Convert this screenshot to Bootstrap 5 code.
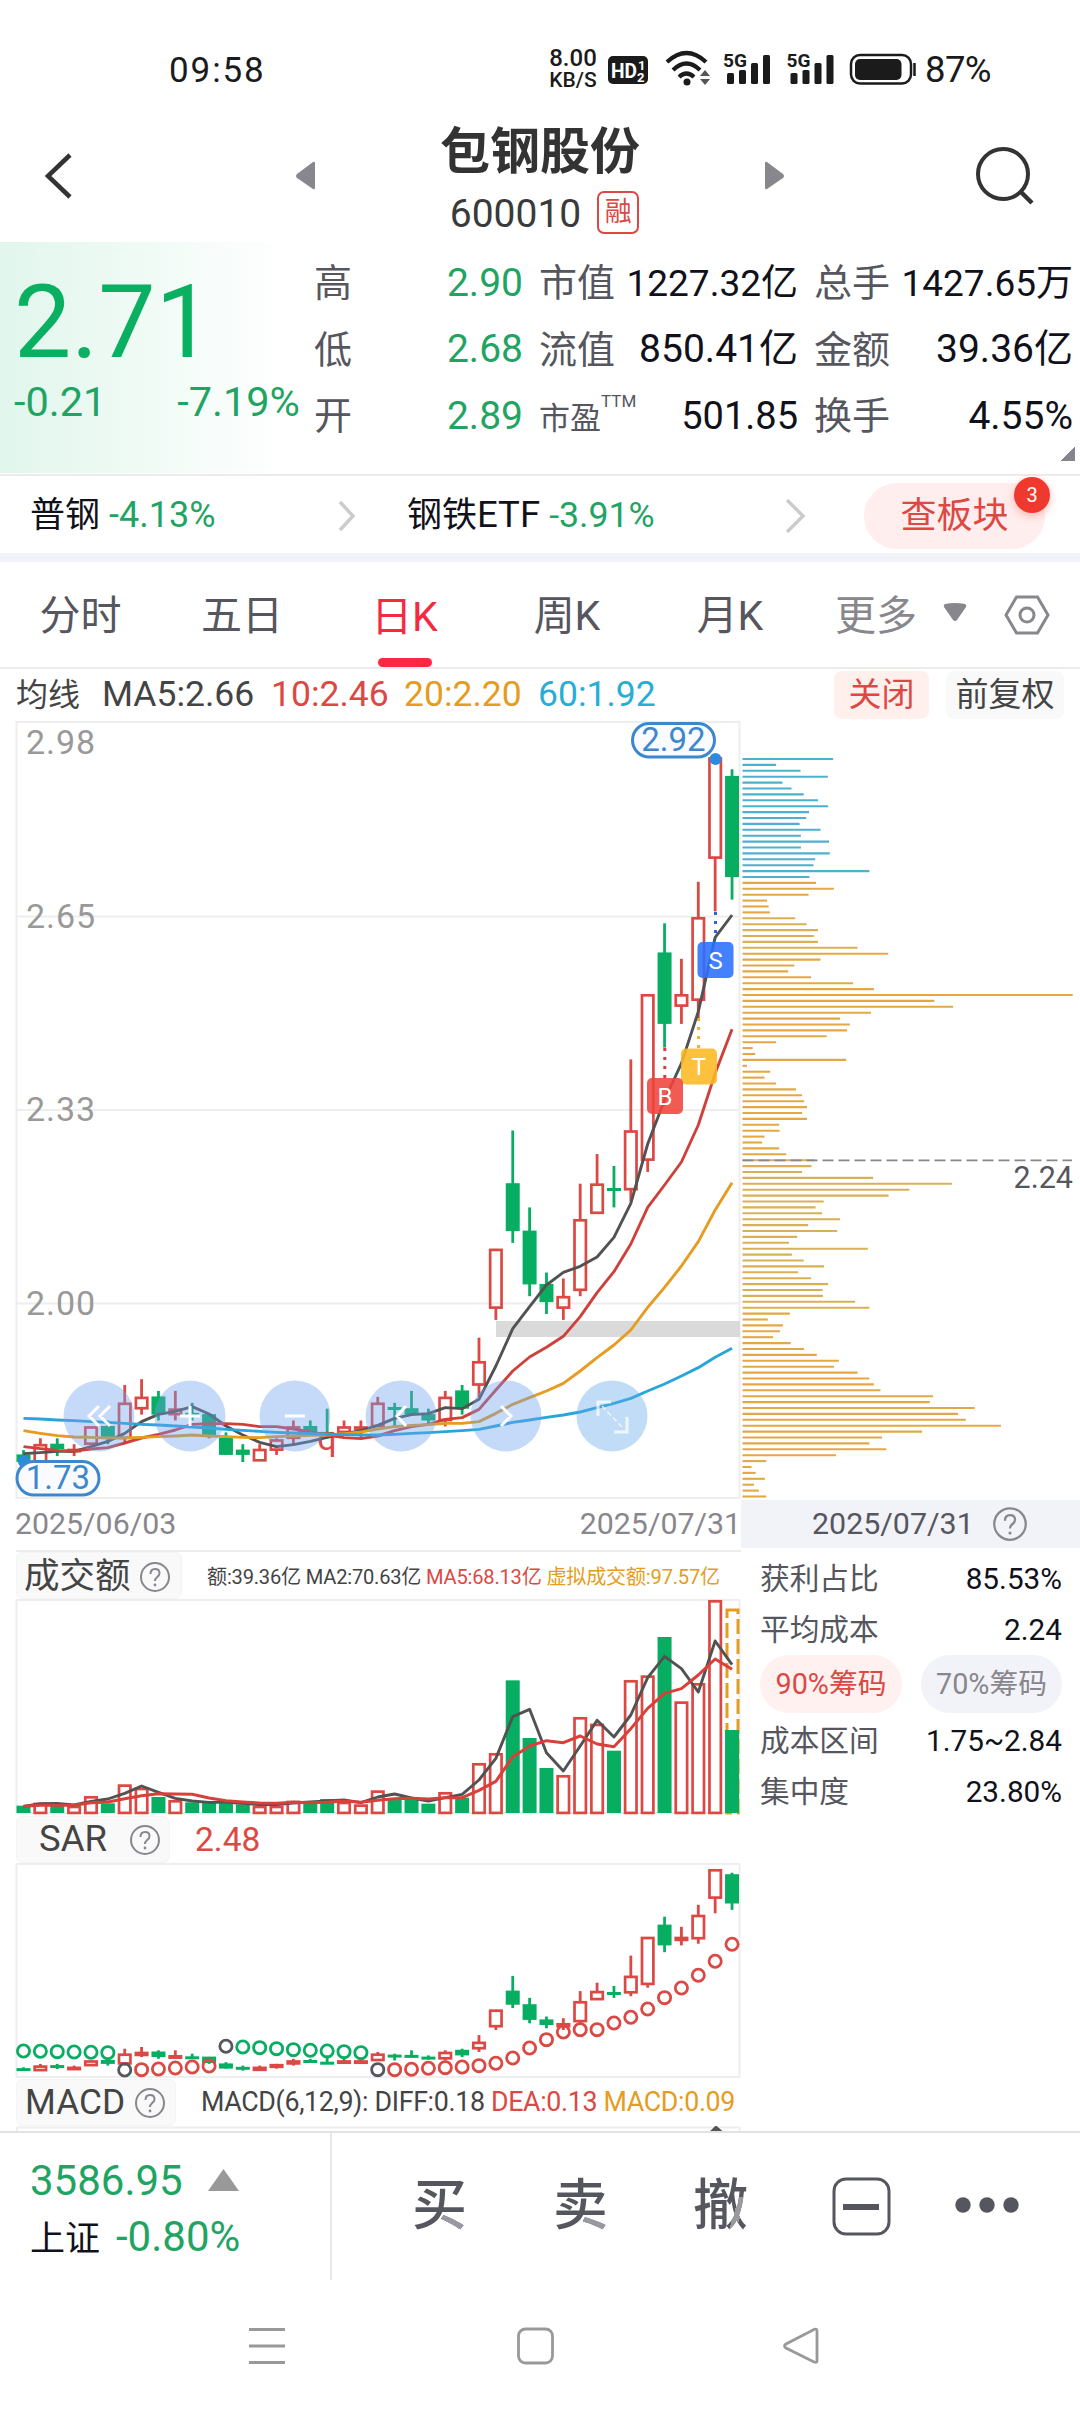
<!DOCTYPE html>
<html lang="zh-CN">
<head>
<meta charset="utf-8">
<meta name="viewport" content="width=device-width, initial-scale=1">
<title>包钢股份 600010</title>
<link href="https://cdn.jsdelivr.net/npm/bootstrap@5.3.0/dist/css/bootstrap.min.css" rel="stylesheet">
<style>
:root{--up:#dc4843;--down:#1fa463;--ink:#55565e;--ink2:#10111a;--pale:#f2f3f8;--rose:#ffeeed}
body{font-family:Roboto,"Noto Sans CJK SC",sans-serif;width:1080px;background:#fff;color:var(--ink2);overflow-x:hidden}
.app{width:1080px;height:2412px;overflow:hidden}
.app *{white-space:nowrap;line-height:1}
svg{display:block;flex:none}
.c-up{color:var(--up)}.c-down{color:var(--down)}.c-ink{color:var(--ink)}.c-txt{color:#444}.c-gray{color:#88878d}.c-gold{color:#e59c20}.c-cyan{color:#28add6}.c-row>*{flex:none}
.statusbar{height:106px;padding:34px 86px 0 169px;font-size:35px;color:#1b1b1b}
.clock{letter-spacing:1.9px}
.netrate{font-size:24px;width:56px;text-align:center;font-weight:500}
.netrate span{display:block;height:24px}
.titlebar{height:136px}
.stockname{font-size:50px;font-weight:700;color:#333;height:64px}
.stockcode{font-size:39px;color:#3a3a3a}
.rong{width:42px;height:43px;border:2px solid var(--up);border-radius:7px;font-size:27px}
.quote{height:232px}
.lastbox{width:303px;height:231px;background:linear-gradient(90deg,#e1f6ec,#fff 290px);padding:29px 3px 0 14px}
.lastprice{font-size:102px;color:#0ab062;height:110px}
.chg{font-size:41.5px}
.figures{width:777px;padding:8px 5px 0 11px;font-size:39px}
.figures .fig-line{height:66.5px}
.figures .cjk{font-size:38px}
.tight{font-size:37px}
.f1{width:209px}.f2{width:259px}.f3{width:259px}
.ttm{font-size:17px;margin-bottom:30px}
.cornertri{width:15px;height:15px;background:linear-gradient(135deg,transparent 50%,#85858d 50%);margin:-4px 0 0 auto}
.sector{height:79px;border-top:2px solid #ececec;font-size:36.5px;padding-left:30px;padding-top:2px}
.sector .s-name{font-size:35px}
.btn-sector{width:181px;height:66px;border-radius:33px;background:var(--rose);color:var(--up);font-size:36px}
.dotnum{position:absolute;right:-5px;top:-6px;width:36px;height:36px;border-radius:50%;background:#ef392f;color:#fff;font-size:20px;box-shadow:0 3px 9px #f0877f88}
.band{height:9px;background:var(--pale)}
.ktabs{height:107px;border-bottom:2px solid #ececec;font-size:41px;color:var(--ink)}
.ktabs>div{flex:none;height:105px;padding-top:4px}
.ktabs .on{color:#f5293f}
.ktabs .on i{display:block;width:54px;height:9px;border-radius:5px;background:#ff2842}
.marow{height:53px;font-size:35.5px;padding:0 0 2px 16px}
.chip{border-radius:8px;height:48px;font-size:33px}
.kcol{width:741px;height:1409px}
#kline{overflow:visible}
.ccol{width:339px}
.dates{height:51px;padding:10px 0 0 15px;font-size:30.3px}
.seg{border-top:2px solid #ececec;margin-left:16px}
.ind-head{height:47px}
.ind-head.seg{height:49px}
.ind-tag{background:#f9f9f9;border:1px solid #f4f4f4;border-radius:7px;height:47px;font-size:37px;color:#444}
.cdate{height:48px;background:var(--pale);font-size:30.4px;color:var(--ink)}
.stats{padding:5px 18px 0 19px;font-size:29.7px}
.stats .st{height:51px}
.pill{height:58px;border-radius:29px;font-size:28.8px}
.botbar{height:149px;border-top:2px solid #e2e2e2}
.idx{width:332px;height:147px;border-right:2px solid #e8e8e8;padding:27px 0 0 30px;font-size:42px}
.act{font-size:55px;font-weight:500;color:transparent;background:linear-gradient(#999aa0,#999aa0) 100% 100%/25px 20px no-repeat,#55565e;-webkit-background-clip:text;background-clip:text;width:55px;height:60px;line-height:60px}
.act-che{background:linear-gradient(107deg,transparent 69%,#999aa0 69% 80%,transparent 80%) 0 100%/100% 38px no-repeat,#55565e;-webkit-background-clip:text;background-clip:text}
.sysnav{height:132px}
</style>
</head>
<body>
<div class="app d-flex flex-column">
  <header class="statusbar d-flex align-items-center">
    <span class="clock">09:58</span>
    <div class="ms-auto d-flex align-items-center">
      <div class="netrate" style="margin-right:4px"><span>8.00</span><span style="font-size:21px">KB/S</span></div>
      <svg width="314" height="44" viewBox="605 48 314 44">
        <rect x="608" y="56" width="40" height="28" rx="5" fill="#1b1b1b"/>
        <g fill="#fff" font-weight="700"><text x="611" y="78" font-size="21" textLength="26" lengthAdjust="spacingAndGlyphs">HD</text><text x="638" y="70" font-size="13">1</text><text x="637" y="82" font-size="13">2</text></g>
        <g fill="none" stroke="#1b1b1b" stroke-width="4.200"><path d="M667 62q19.500-18 39 0M673 70q13.500-13 27 0M679 77q7.500-7 15 0"/></g>
        <circle cx="687" cy="82" r="3.500" fill="#1b1b1b"/><path d="M700 76l5-6 5 6zM700 79l5 6 5-6z" fill="#555"/>
        <g id="sig" fill="#1b1b1b"><text x="723" y="67" font-size="19" font-weight="700" textLength="24" lengthAdjust="spacingAndGlyphs">5G</text><rect x="727" y="73" width="7" height="11" rx="1.500"/><rect x="739" y="70" width="7" height="14" rx="1.500"/><rect x="751" y="63" width="7" height="21" rx="1.500"/><rect x="763" y="55" width="7" height="29" rx="1.500"/></g>
        <use href="#sig" x="63.500"/>
        <rect x="851" y="55" width="60" height="28.500" rx="9" fill="none" stroke="#1b1b1b" stroke-width="2.500"/><rect x="855" y="59" width="46.500" height="21" rx="5" fill="#1b1b1b"/><path d="M914.500 63v13" stroke="#1b1b1b" stroke-width="2.500"/>
      </svg>
      <span style="margin-left:6px;width:69px;font-size:36.5px;letter-spacing:-.6px">87%</span>
    </div>
  </header>

  <div class="titlebar d-flex align-items-start">
    <svg width="440" height="136" viewBox="0 106 440 136"><path d="M70 155L48 176L70 197" fill="none" stroke="#333" stroke-width="4.500"/><path d="M315 163v25q0 2-2 1L297 178q-2-2 0-4L313 162q2-1 2 1z" fill="#88878d"/></svg>
    <div class="d-flex flex-column align-items-center" style="width:200px;padding-top:21px">
      <div class="stockname">包钢股份</div>
      <div class="d-flex align-items-center" style="padding-left:9px"><span class="stockcode" style="padding-top:3px">600010</span><span class="rong c-up d-flex align-items-center justify-content-center" style="margin-left:16px">融</span></div>
    </div>
    <svg width="440" height="136" viewBox="640 106 440 136"><path d="M765 163v25q0 2 2 1L783 178q2-2 0-4L767 162q-2-1-2 1z" fill="#88878d"/><circle cx="1003" cy="174" r="25" fill="none" stroke="#333" stroke-width="4"/><path d="M1021 192L1032 203" stroke="#333" stroke-width="4.500"/></svg>
  </div>

  <section class="quote d-flex">
    <div class="lastbox c-down"><div class="lastprice">2.71</div><div class="chg d-flex justify-content-between"><span>-0.21</span><span>-7.19%</span></div></div>
    <div class="figures">
      <div class="fig-line d-flex align-items-center"><div class="f1 d-flex align-items-center justify-content-between"><span class="cjk c-ink">高</span><span class="c-down">2.90</span></div><div class="f2 d-flex align-items-center justify-content-between ms-3"><span class="cjk c-ink">市值</span><span class="tight">1227.32亿</span></div><div class="f3 d-flex align-items-center justify-content-between ms-3"><span class="cjk c-ink">总手</span><span class="tight">1427.65万</span></div></div>
      <div class="fig-line d-flex align-items-center"><div class="f1 d-flex align-items-center justify-content-between"><span class="cjk c-ink">低</span><span class="c-down">2.68</span></div><div class="f2 d-flex align-items-center justify-content-between ms-3"><span class="cjk c-ink">流值</span><span>850.41亿</span></div><div class="f3 d-flex align-items-center justify-content-between ms-3"><span class="cjk c-ink">金额</span><span>39.36亿</span></div></div>
      <div class="fig-line d-flex align-items-center"><div class="f1 d-flex align-items-center justify-content-between"><span class="cjk c-ink">开</span><span class="c-down">2.89</span></div><div class="f2 d-flex align-items-center ms-3"><span class="c-ink" style="font-size:31px;padding-top:4px">市盈</span><span class="ttm c-ink">TTM</span><span class="ms-auto" style="font-size:38px">501.85</span></div><div class="f3 d-flex align-items-center justify-content-between ms-3"><span class="cjk c-ink">换手</span><span>4.55%</span></div></div>
      <div class="cornertri"></div>
    </div>
  </section>

  <section class="sector d-flex align-items-center c-row">
    <div style="width:307px"><span class="s-name">普钢</span> <span class="c-down" style="font-size:36px">-4.13%</span></div>
    <svg width="70" height="40"><path d="M3 6L16 20L3 34" fill="none" stroke="#ccc" stroke-width="3.500"/></svg>
    <div style="width:377px"><span class="s-name">钢铁</span>ETF <span class="c-down" style="font-size:35.7px">-3.91%</span></div>
    <svg width="80" height="40"><path d="M3 4L19 20L3 36" fill="none" stroke="#ccc" stroke-width="3.500"/></svg>
    <div class="btn-sector position-relative d-flex align-items-center justify-content-center">查板块<span class="dotnum d-flex align-items-center justify-content-center">3</span></div>
  </section>
  <div class="band"></div>

  <nav class="ktabs d-flex">
    <div class="d-flex align-items-center justify-content-center" style="width:161px">分时</div>
    <div class="d-flex align-items-center justify-content-center" style="width:162px">五日</div>
    <div class="on d-flex flex-column align-items-center justify-content-end" style="width:163px"><span style="margin-bottom:20px">日K</span><i></i></div>
    <div class="d-flex align-items-center justify-content-center" style="width:162px">周K</div>
    <div class="d-flex align-items-center justify-content-center" style="width:164px">月K</div>
    <div class="d-flex align-items-center c-gray" style="padding-left:23px">更多
      <svg class="ms-4" width="140" height="60" viewBox="940 586 140 60"><path d="M944 603q10-2 20 0q2 1 1 3L956 619q-2 2-4 0L943 606q-1-2 1-3z" fill="#88878d"/><path d="M1005 614L1015.500 596H1036.500L1047 614L1036.500 632H1015.500Z" fill="none" stroke="#88878d" stroke-width="3"/><circle cx="1026" cy="614" r="7" fill="none" stroke="#88878d" stroke-width="3"/></svg></div>
  </nav>

  <div class="marow d-flex align-items-center c-row c-txt">
    <span style="font-size:32px;width:86px">均线</span><span style="width:169px">MA5:2.66</span><span class="c-up" style="width:133px">10:2.46</span><span class="c-gold" style="width:134px">20:2.20</span><span class="c-cyan" style="width:119px">60:1.92</span>
    <span class="chip c-up d-flex align-items-center justify-content-center" style="width:95px;margin-left:177px;background:#fff0ee">关闭</span>
    <span class="chip d-flex align-items-center justify-content-center" style="width:118px;margin-left:17px;background:#f9f9f9">前复权</span>
  </div>

  <main class="d-flex" style="height:1409px">
    <div class="kcol">
      <svg id="kline" width="741" height="777" viewBox="0 722 741 777"></svg>
      <div class="dates d-flex justify-content-between c-gray"><span>2025/06/03</span><span>2025/07/31</span></div>
      <div class="seg ind-head d-flex align-items-center">
        <div class="ind-tag d-flex align-items-center" style="width:166px;font-size:35.500px;padding:2px 0 0 7px">成交额<svg class="ms-2" width="32" height="32"><use href="#q"/></svg></div>
        <div class="c-txt" style="margin-left:25px;font-size:20.100px;letter-spacing:-.2px;padding-top:3px">额:39.36亿 MA2:70.63亿 <span class="c-up">MA5:68.13亿</span> <span class="c-gold">虚拟成交额:97.57亿</span></div>
      </div>
      <svg id="vol" width="741" height="217" viewBox="0 1599 741 217"></svg>
      <div class="ind-head d-flex align-items-center" style="margin-left:16px">
        <div class="ind-tag d-flex align-items-center" style="width:154px;padding-left:22px;font-size:36.500px">SAR<svg style="margin-left:22px" width="32" height="32"><use href="#q"/></svg></div>
        <div class="c-up" style="margin-left:25px;font-size:33.500px">2.48</div>
      </div>
      <svg id="sar" width="741" height="216" viewBox="0 1863 741 216"></svg>
      <div class="ind-head d-flex align-items-center" style="margin-left:16px">
        <div class="ind-tag d-flex align-items-center" style="width:160px;padding-left:8px;font-size:35.300px">MACD<svg style="margin-left:9px" width="32" height="32"><use href="#q"/></svg></div>
        <div class="c-txt" style="margin-left:25px;font-size:26.800px;letter-spacing:-.35px">MACD(6,12,9): DIFF:0.18 <span class="c-up">DEA:0.13</span> <span class="c-gold">MACD:0.09</span></div>
      </div>
      <svg width="741" height="5" viewBox="0 2126 741 5"><path d="M17 2140V2127.500H739.500V2140" fill="none" stroke="#eee" stroke-width="2"/><path d="M711 2133L716 2128L725 2136" fill="none" stroke="#555" stroke-width="4"/></svg>
    </div>
    <div class="ccol">
      <svg id="chips" width="339" height="778" viewBox="741 722 339 778"></svg>
      <div class="cdate d-flex align-items-center" style="padding-left:71px">2025/07/31<svg style="margin-left:18px" width="36" height="36" viewBox="0 0 32 32"><use href="#q"/></svg></div>
      <div class="stats">
        <div class="st d-flex align-items-center justify-content-between"><span class="c-ink">获利占比</span><span>85.53%</span></div>
        <div class="st d-flex align-items-center justify-content-between"><span class="c-ink">平均成本</span><span>2.24</span></div>
        <div class="d-flex justify-content-between" style="height:60px"><div class="pill c-up d-flex align-items-center justify-content-center" style="width:142px;background:#fff1f0">90%筹码</div><div class="pill c-gray d-flex align-items-center justify-content-center" style="width:141px;background:var(--pale)">70%筹码</div></div>
        <div class="st d-flex align-items-center justify-content-between"><span class="c-ink">成本区间</span><span>1.75~2.84</span></div>
        <div class="st d-flex align-items-center justify-content-between"><span class="c-ink">集中度</span><span>23.80%</span></div>
      </div>
    </div>
  </main>

  <footer class="botbar d-flex">
    <div class="idx"><div class="c-down d-flex align-items-center" style="height:42px">3586.95<svg style="margin-left:24px" width="34" height="24"><path d="M16.500 0L32 22H1Z" fill="#999"/></svg></div><div class="c-down" style="margin-top:14px;height:42px"><span style="font-size:35px;color:var(--ink2)">上证</span><span style="margin-left:16px">-0.80%</span></div></div>
    <div class="d-flex" style="padding:42px 0 0 80px"><div class="act">买</div><div class="act" style="margin-left:86px">卖</div><div class="act act-che" style="margin-left:85px">撤</div>
      <svg style="margin-left:81px" width="200" height="62" viewBox="829 2175 200 62"><rect x="834" y="2179" width="55" height="55" rx="12" fill="none" stroke="#55565e" stroke-width="3"/><path d="M843 2207h36" stroke="#55565e" stroke-width="6"/><g fill="#55565e"><circle cx="963" cy="2205" r="7.700"/><circle cx="987" cy="2205" r="7.700"/><circle cx="1011" cy="2205" r="7.700"/></g></svg></div>
  </footer>
  <div class="sysnav"><svg width="1080" height="132" viewBox="0 2280 1080 132"><g fill="none" stroke="#999" stroke-width="2.800"><path d="M249 2329.500h36M249 2346h36M249 2362.500h36"/><rect x="518.500" y="2329" width="34" height="34" rx="7"/><path d="M817 2331V2361q0 2-3 1L786 2348q-3-2 0-4L814 2329.500q3-1 3 1.500z"/></g></svg></div>
</div>

<svg width="0" height="0" class="position-absolute"><symbol id="q" viewBox="0 0 32 32"><circle cx="16" cy="16" r="14" fill="none" stroke="#88878d" stroke-width="2"/><path d="M11.500 13q0-5 4.500-5t4.500 4.300q0 2.200-2.500 3.900q-2 1.500-2 3.800" fill="none" stroke="#88878d" stroke-width="2"/><circle cx="16" cy="24" r="1.400" fill="#88878d"/></symbol></svg>

<script>
const R='#dc4843',G='#07ae62',D='#525252',Y='#e59c20',C='#28a6d9';
const X=i=>+(23.5+i*16.87).toFixed(2);
// [rising, high, body top, body bottom, low]
const K=[[0,1.75,1.742,1.73,1.73],[1,1.77,1.76,1.73,1.73],[0,1.77,1.76,1.752,1.74],[1,1.76,1.752,1.748,1.74],[1,1.79,1.79,1.76,1.76],[0,1.80,1.79,1.77,1.76],[1,1.86,1.83,1.77,1.76],[1,1.87,1.84,1.82,1.81],[0,1.85,1.84,1.81,1.80],[1,1.85,1.82,1.81,1.80],[0,1.83,1.812,1.808,1.80],[0,1.81,1.81,1.775,1.77],[0,1.78,1.77,1.742,1.742],[0,1.76,1.75,1.742,1.73],[1,1.76,1.752,1.732,1.732],[1,1.77,1.768,1.75,1.742],[1,1.80,1.79,1.77,1.76],[0,1.80,1.79,1.78,1.775],[0,1.82,1.78,1.775,1.77],[1,1.80,1.79,1.78,1.775],[1,1.80,1.79,1.788,1.77],[1,1.84,1.83,1.79,1.79],[0,1.83,1.822,1.818,1.79],[0,1.85,1.82,1.81,1.81],[0,1.82,1.81,1.80,1.795],[1,1.85,1.84,1.80,1.79],[0,1.86,1.85,1.82,1.81],[1,1.94,1.90,1.86,1.84],[1,2.09,2.09,1.99,1.97],[0,2.29,2.20,2.12,2.10],[0,2.16,2.12,2.03,2.01],[0,2.05,2.03,2,1.98],[1,2.04,2.01,1.99,1.97],[1,2.20,2.14,2.02,2.01],[1,2.25,2.20,2.15,2.15],[0,2.23,2.192,2.188,2.16],[1,2.41,2.29,2.19,2.17],[1,2.52,2.52,2.24,2.22],[0,2.64,2.59,2.47,2.43],[1,2.58,2.52,2.50,2.47],[1,2.71,2.65,2.51,2.48],[1,2.92,2.92,2.75,2.66],[0,2.90,2.888,2.718,2.68]];
const line=(a,b,c,d,s,w=2.8,e='')=>`<line x1="${a}" y1="${b}" x2="${c}" y2="${d}" stroke="${s}" stroke-width="${w}" ${e}/>`;
const poly=(p,s,w=2.9)=>`<polyline points="${p.map(q=>q.join()).join(' ')}" fill="none" stroke="${s}" stroke-width="${w}" stroke-linejoin="round"/>`;
function candles(f,w){return K.map(([up,h,t,b,l],i)=>{const x=X(i);
  if(up){const y1=f(t)+1,y2=Math.max(f(b)-0.5,y1+1.2);return line(x,f(h),x,y1,R)+line(x,y2,x,f(l),R)+`<rect x="${x-w/2+1.3}" y="${y1}" width="${w-2.6}" height="${y2-y1}" fill="none" stroke="${R}" stroke-width="2.7"/>`}
  return line(x,f(h),x,f(l),G)+`<rect x="${x-w/2}" y="${f(t)-.5}" width="${w}" height="${Math.max(3,f(b)-f(t)+.5)}" fill="${G}"/>`}).join('')}
const at=(base,a)=>a.map((v,i)=>[X(i),base+v/3]);
// moving averages, y in thirds of a pixel below 1280
const m5=at(1280,[521,518,514,514,500,484,460,425,403,394,380,402,438,465,487,500,494,484,472,461,452,436,415,404,401,383,386,358,258,146,80,15,-23,-41,-69,-128,-230,-408,-540,-650,-805,-1028,-1095]);
const m10=at(1280,[500,506,511,513,507,503,489,474,463,450,433,431,431,433,440,440,447,456,465,473,476,468,452,440,433,418,413,388,330,273,231,202,169,110,38,-25,-108,-218,-285,-354,-465,-620,-752]);
const m20=at(1280,[452,460,467,471,472,474,474,472,470,468,465,468,470,472,473,470,468,466,465,461,456,447,440,436,434,430,430,425,400,373,353,333,310,273,233,195,150,82,22,-42,-115,-210,-292]);
const m60=at(1280,[415,417,420,422,425,427,430,433,435,438,441,444,448,451,454,457,459,461,463,464,465,465,463,460,458,455,452,448,438,427,420,412,405,396,383,370,355,333,312,288,263,232,205]);
let s='<rect x="16.500" y="722" width="723" height="776" fill="none" stroke="#eee" stroke-width="2"/>';
for(const y of [916.5,1110,1303.5])s+=line(17,y,740,y,'#eee',2);
s+='<rect x="496" y="1321" width="244" height="16" fill="#dadada"/>';
const P=p=>+(757.5+(2.92-p)*592).toFixed(1);
s+=candles(P,14);
s+=line(715.5,912,715.5,933,'#2f62d8',3,'stroke-dasharray="3 6"')+line(698.6,1018,698.6,1050,'#eeb12c',3,'stroke-dasharray="3 6"')+line(664.8,1048,664.8,1080,'#d83a3a',3,'stroke-dasharray="3 6"');
s+='<text x="327" y="1450" text-anchor="middle" font-size="34" fill="#dc4843">q</text>';
s+=poly(m5,D)+poly(m10,'#cf403b')+poly(m20,Y)+poly(m60,C);
const tag=(x,y,c,t)=>`<rect x="${x-18}" y="${y-18}" width="36" height="36" rx="5" fill="${c}" fill-opacity=".88"/><text x="${x}" y="${y+8.5}" text-anchor="middle" font-size="24" fill="#fff">${t}</text>`;
s+=tag(715.5,960,'#2a70ff','S')+tag(699,1066.5,'#fdb822','T')+tag(665,1096,'#ee443c','B');
for(const [x,c] of [[99,'#6f9fee'],[190,'#6f9fee'],[295,'#6f9fee'],[401,'#6f9fee'],[506,'#6f9fee'],[612,'#62a8ea']])s+=`<circle cx="${x}" cy="1416" r="35.5" fill="${c}" fill-opacity=".4"/>`;
s+='<g fill="none" stroke="#fff" stroke-width="3"><path d="M99 1406L89 1416L99 1426M110 1406L100 1416L110 1426M180 1416H200M190 1406V1426M285 1416H305M406 1406L397 1416L406 1426M501 1406L511 1416L501 1426"/><path d="M598 1416V1402H611M614 1432H627V1417" stroke-opacity=".75"/><path d="M602 1406L623 1428" stroke-width="1.5" stroke-dasharray="5 3" stroke-opacity=".75"/></g>';
s+='<g font-size="34" fill="#999"><text x="26" y="754" textLength="69">2.98</text><text x="26" y="928" textLength="69">2.65</text><text x="26" y="1121" textLength="69">2.33</text><text x="26" y="1315" textLength="69">2.00</text></g>';
const cap=(x,y,t)=>`<rect x="${x}" y="${y}" width="82" height="33.5" rx="16.7" fill="#f8fbff" fill-opacity=".9" stroke="#3d88cc" stroke-width="3"/><text x="${x+41}" y="${y+27.5}" text-anchor="middle" font-size="33" fill="#3d88cc">${t}</text>`;
s+='<circle cx="24" cy="1461.500" r="6" fill="#2c8ae0"/>'+cap(632.5,723.5,'2.92')+cap(17,1461.5,'1.73')+'<circle cx="715.500" cy="759" r="6" fill="#2c8ae0"/>';
document.getElementById('kline').innerHTML=s;

// turnover
const V=[797,788,797,797,768,790,733,743,771,780,787,788,790,793,797,797,782,788,777,785,793,751,778,778,791,756,773,669,639,421,594,684,705,531,551,632,420,406,291,484,429,180,570];
s='<rect x="16.500" y="1600" width="723" height="213" fill="none" stroke="#eee" stroke-width="2"/>';
s+='<rect x="727" y="1610" width="11" height="203" fill="none" stroke="#e59c20" stroke-width="3" stroke-dasharray="15 5"/>';
V.forEach((v,i)=>{const y=1540+v/3,x=X(i);s+=K[i][0]?`<rect x="${x-5.7}" y="${y+1.3}" width="11.4" height="${1811.6-y}" fill="none" stroke="${R}" stroke-width="2.7"/>`:`<rect x="${x-7}" y="${y}" width="14" height="${1813-y}" fill="${G}"/>`});
s+=poly(at(1540,[799,791,790,795,784,777,760,738,757,775,783,787,787,790,794,794,789,786,783,780,788,771,762,774,783,773,763,720,655,530,508,638,693,618,541,591,525,413,349,386,456,303,374]),D)+poly(at(1540,[799,796,796,796,788,786,776,767,761,762,763,774,782,786,789,790,787,788,787,783,787,781,776,775,777,773,773,751,724,651,618,602,608,588,612,620,566,505,460,446,405,357,388]),'#d84039',3);
document.getElementById('vol').innerHTML=s;

// parabolic SAR
const S=[722,723,724,725,726,727,779,778,776,773,770,767,708,710,712,715,718,720,722,724,727,778,778,777,774,772,770,766,759,743,713,688,665,658,658,638,621,596,562,533,495,453,402];
s='<rect x="16.500" y="1863.900" width="723" height="213" fill="none" stroke="#eee" stroke-width="2"/>'+candles(p=>+(1869.3+(2.92-p)*169.2).toFixed(1),14);
S.forEach((v,i)=>{const c=[6,12,21].includes(i)?'#55565e':(i<6||(i>12&&i<21))?G:R;s+=`<circle cx="${X(i)}" cy="${1810.3+v/3}" r="6.1" fill="none" stroke="${c}" stroke-width="2.8"/>`});
document.getElementById('sar').innerHTML=s;

// chip distribution: bar ends on a 2.45x scale starting at 741
const B=[963,823,883,950,839,861,891,926,951,904,897,881,932,884,953,884,955,919,915,1052,905,921,965,903,801,805,808,870,898,926,916,926,1023,1098,932,868,853,909,1012,1063,1550,1211,1257,1056,980,1004,997,947,823,766,772,995,752,809,795,823,872,887,892,899,887,899,831,832,795,789,831,848,918,910,887,1061,1254,1150,1099,940,920,936,980,902,973,875,855,1048,862,891,941,877,909,951,937,938,1017,1052,857,803,840,833,816,859,892,923,977,965,1023,1052,1063,1079,1208,1200,1310,1269,1288,1374,1181,1083,1052,1093,970,799,763,773,796,769,781,799];
s='';
B.forEach((b,i)=>{const y=(759+i*5.9).toFixed(1);s+=line(742.5,y,(742.5+(b-741)/2.45).toFixed(1),y,i<21?'#4db0cf':(i>26&&i<33||i>67&&i<94?'#d9b055':'#e3a845'),2.1)});
s+=line(742.5,1160.3,1072,1160.3,'#888',1.8,'stroke-dasharray="11 5"')+'<text x="1073" y="1188" text-anchor="end" font-size="30.500" fill="#55565e">2.24</text>';
document.getElementById('chips').innerHTML=s;
</script>
<script src="https://cdn.jsdelivr.net/npm/bootstrap@5.3.0/dist/js/bootstrap.bundle.min.js"></script>
</body>
</html>
